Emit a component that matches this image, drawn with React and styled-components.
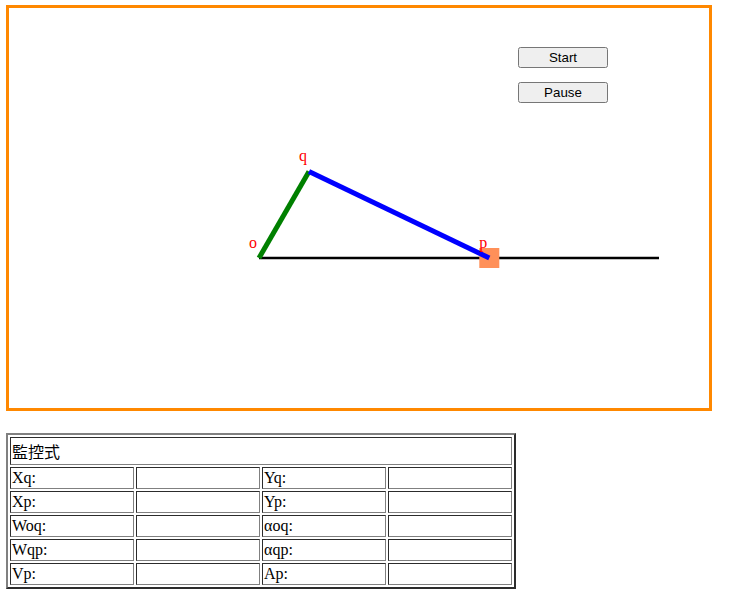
import React from "react";
import styled, { createGlobalStyle } from "styled-components";

const GlobalStyle = createGlobalStyle`
  body { margin: 0; background: #fff; color: #000; }
`;

const Page = styled.main`
  display: flex;
  flex-direction: column;
  align-items: flex-start;
  gap: 22px;
  padding: 5px 6px;
  font: 16px "Liberation Serif", "Noto Sans CJK JP", serif;
`;

const Stage = styled.section`
  position: relative;
  box-sizing: border-box;
  width: 706px;
  height: 406px;
  border: 3px solid #ff8800;
`;

const Drawing = styled.svg`
  display: block;
  width: 700px;
  height: 400px;
`;

const PointLabel = styled.text`
  fill: red;
  font-size: 16px;
`;

const Controls = styled.div`
  position: absolute;
  top: 39px;
  left: 509px;
  display: flex;
  flex-direction: column;
  gap: 14px;
`;

const ControlButton = styled.button`
  box-sizing: border-box;
  width: 90px;
  height: 21px;
  padding: 1px 6px;
  font: 13.3333px "Liberation Sans", sans-serif;
`;

const MonitorTable = styled.table`
  width: 510px;
  border: 2px outset gray;
  border-spacing: 2px;
`;

const Cell = styled.td`
  width: 120px;
  height: ${({ $heading }) => ($heading ? "20px" : "18px")};
  padding: ${({ $heading }) => ($heading ? "5px 1px 1px" : "1px")};
  border: 1px inset gray;
  line-height: ${({ $heading }) => ($heading ? "20px" : "18px")};
`;

const rows = [
  ["Xq:", "Yq:"],
  ["Xp:", "Yp:"],
  ["Woq:", "αoq:"],
  ["Wqp:", "αqp:"],
  ["Vp:", "Ap:"],
];

export default function App() {
  return (
    <Page>
      <GlobalStyle />
      <Stage>
        <Drawing viewBox="0 0 700 400">
          <line x1="250" y1="250" x2="650" y2="250" stroke="black" strokeWidth="2.5" />
          <rect x="470.3" y="240" width="20" height="20" fill="#ff9059" />
          <line x1="250" y1="250" x2="300" y2="163.4" stroke="green" strokeWidth="5" />
          <line x1="300" y1="163.4" x2="480.3" y2="250" stroke="blue" strokeWidth="5" />
          <PointLabel x="240" y="240">o</PointLabel>
          <PointLabel x="290" y="153.4">q</PointLabel>
          <PointLabel x="470.3" y="240">p</PointLabel>
        </Drawing>
        <Controls>
          <ControlButton>Start</ControlButton>
          <ControlButton>Pause</ControlButton>
        </Controls>
      </Stage>
      <MonitorTable>
        <tbody>
          <tr>
            <Cell colSpan={4} $heading>監控式</Cell>
          </tr>
          {rows.map(([left, right]) => (
            <tr key={left}>
              <Cell>{left}</Cell>
              <Cell />
              <Cell>{right}</Cell>
              <Cell />
            </tr>
          ))}
        </tbody>
      </MonitorTable>
    </Page>
  );
}
